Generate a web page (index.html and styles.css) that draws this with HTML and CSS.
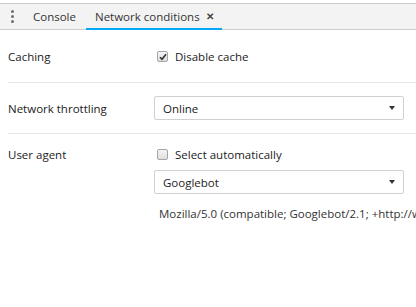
FILE: index.html
```html
<!DOCTYPE html>
<html lang="en">
  <head>
    <meta charset="UTF-8" />
    <title>Network conditions</title>
    <link rel="stylesheet" href="styles.css">
  </head>
  <body>
    <div class="drawer">
      <nav class="tabbar">
        <div class="menu-dots"><span></span><span></span><span></span></div>
        <div class="tab">Console</div>
        <div class="tab selected">Network conditions <span class="close">✕</span></div>
      </nav>
      <main class="panel">
        <section class="row caching">
          <div class="label">Caching</div>
          <div class="field">
            <label class="check">
              <span class="box checked">
                <svg width="8" height="8" viewBox="0 0 8 8"><path d="M1 4.2 L3 6.3 L7 1.2" fill="none" stroke="#333" stroke-width="1.6" /></svg>
              </span>
              Disable cache
            </label>
          </div>
        </section>
        <section class="row throttling">
          <div class="label">Network throttling</div>
          <div class="field">
            <div class="select"><span>Online</span><span class="arrow"></span></div>
          </div>
        </section>
        <section class="row agent">
          <div class="label">User agent</div>
          <div class="field">
            <label class="check"><span class="box"></span> Select automatically</label>
            <div class="select"><span>Googlebot</span><span class="arrow"></span></div>
            <div class="ua-string">Mozilla/5.0 (compatible; Googlebot/2.1; +http://www.google.com/bot.html)</div>
          </div>
        </section>
      </main>
    </div>
  </body>
</html>
```

FILE: styles.css
```css
:root {
  font-family: "Open Sans", "Noto Sans", sans-serif;
  font-size: 11.5px;
  color: #222;
}

* {
  box-sizing: border-box;
}

body {
  margin: 0;
  background: #fff;
  overflow: hidden;
}

.drawer {
  padding-top: 3px;
}

.tabbar {
  display: flex;
  align-items: stretch;
  height: 27px;
  background: #f3f3f3;
  border-top: 1px solid #ccc;
  border-bottom: 1px solid #ccc;
}

.menu-dots {
  display: flex;
  flex-direction: column;
  justify-content: center;
  gap: 2px;
  width: 24px;
  padding-left: 11px;
}

.menu-dots span {
  width: 3px;
  height: 3px;
  border-radius: 50%;
  background: #6e6e6e;
}

.tab {
  display: flex;
  align-items: center;
  padding: 0 10px 0 9px;
  color: #333;
  border-bottom: 2px solid transparent;
  margin-bottom: -1px;
}

.tab.selected {
  border-bottom-color: #03a9f4;
  padding-right: 8px;
}

.close {
  margin-left: 6px;
  font-size: 10px;
  color: #444;
  font-weight: bold;
}

.panel {
  padding: 0 0 0 8px;
}

.row {
  display: flex;
  border-bottom: 1px solid #e8e8e8;
}

.row.agent {
  border-bottom: none;
  padding-top: 13px;
}

.label {
  width: 146px;
  flex-shrink: 0;
  color: #222;
}

.caching {
  height: 53px;
  align-items: center;
  padding-top: 1px;
}

.throttling {
  height: 51px;
  align-items: center;
}

.field {
  flex: 1;
  min-width: 0;
  padding-right: 12px;
}

.check {
  display: flex;
  align-items: center;
  gap: 7px;
  padding-left: 3px;
}

.box {
  display: flex;
  align-items: center;
  justify-content: center;
  width: 11px;
  height: 11px;
  border: 1px solid #a6a6a6;
  border-radius: 2px;
  background: linear-gradient(#f4f4f4, #dedede);
}

.select {
  display: flex;
  justify-content: space-between;
  align-items: center;
  height: 24px;
  padding: 0 8px 0 8px;
  border: 1px solid #d0d0d0;
  border-radius: 2px;
  background: #fff;
  color: #222;
}

.arrow {
  width: 0;
  height: 0;
  border-left: 3.5px solid transparent;
  border-right: 3.5px solid transparent;
  border-top: 4px solid #333;
}

.agent .select {
  margin-top: 8px;
}

.ua-string {
  margin-top: 12px;
  margin-right: -12px;
  padding-left: 5px;
  white-space: nowrap;
  overflow: hidden;
  color: #333;
}
```
